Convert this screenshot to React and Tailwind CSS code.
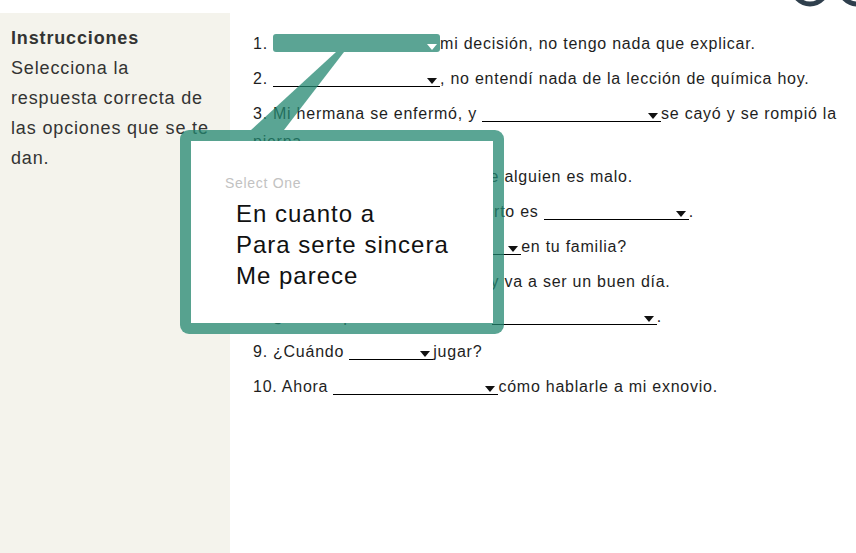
import React from 'react';

const TEAL_GLASS = 'rgba(35,135,112,0.75)';

/* ---------------- DROPDOWN BLANK ---------------- */
function Blank({ w, active }) {
    return (
        <span
            className={
                active
                    ? 'relative inline-block h-[18px] align-[-3px] rounded-[3px] bg-[#5ba494]'
                    : 'relative inline-block h-[18px] align-[-3px] border-b border-black'
            }
            style={{ width: w }}
        >
            <svg
                viewBox="0 0 10 6"
                className="absolute right-[3px] bottom-[2px] w-[10px] h-[6px]"
            >
                <polygon points="0,0 10,0 5,6" fill={active ? '#ffffff' : '#111111'} />
            </svg>
        </span>
    );
}

/* ---------------- QUESTIONS ---------------- */
const questions = [
    <>1. <Blank w={167} active />mi decisión, no tengo nada que explicar.</>,
    <>2. <Blank w={167} />, no entendí nada de la lección de química hoy.</>,
    <>3. Mi hermana se enfermó, y <Blank w={179} />se cayó y se rompió la pierna.</>,
    <>4. <Blank w={192} /> que alguien es malo.</>,
    <>5. <Blank w={174} /> lo cierto es <Blank w={145} />.</>,
    <>6. ¿Qué pasa <Blank w={157} />en tu familia?</>,
    <>7. <Blank w={193} /> hoy va a ser un buen día.</>,
    <>8. ¿Sabes qué? Lo malo sí es <Blank w={165} />.</>,
    <>9. ¿Cuándo <Blank w={84} />jugar?</>,
    <>10. Ahora <Blank w={165} />cómo hablarle a mi exnovio.</>,
];

export default function App() {
    return (
        <div
            className="relative w-full h-[553px] overflow-hidden bg-white flex flex-col"
            style={{ fontFamily: '"Liberation Sans", Arial, sans-serif' }}
        >
            {/* TOP STRIP */}
            <div className="h-[13px] shrink-0 bg-white" />

            <div className="flex flex-1 min-h-0">
                {/* SIDEBAR */}
                <aside className="w-[230px] shrink-0 bg-[#f4f3ec] pl-[11px] pr-[19px] pt-[10px] text-[18px] leading-[30px] tracking-[0.85px] text-[#333333]">
                    <h2 className="font-bold">Instrucciones</h2>
                    <p>Selecciona la respuesta correcta de las opciones que se te dan.</p>
                </aside>

                {/* QUESTIONS */}
                <main className="flex-1 bg-white pl-[23px] pr-[10px] pt-[17px]">
                    <ol className="flex flex-col gap-[7px] text-[16px] leading-[28px] tracking-[0.75px] text-[#1e1e1e]">
                        {questions.map((q, i) => (
                            <li key={i}>{q}</li>
                        ))}
                    </ol>
                </main>
            </div>

            {/* POPUP TAIL (translucent, over the text) */}
            <svg
                className="absolute left-0 top-0 z-20 pointer-events-none"
                width="856"
                height="140"
                viewBox="0 0 856 140"
            >
                <polygon points="336,52 344,52 284,130 251,130" fill={TEAL_GLASS} />
            </svg>

            {/* POPUP */}
            <div className="absolute z-20 left-[180px] top-[130px] w-[324px] h-[204px] rounded-[9px] border-[11px] border-[rgba(35,135,112,0.75)] bg-white bg-clip-padding">
                <div className="pl-[34px] pt-[32px]">
                    <div className="text-[14px] leading-[20px] tracking-[0.7px] text-[#c2c2c2]">Select One</div>
                    <ul className="mt-[5px] pl-[11px] text-[24px] leading-[31px] tracking-[1px] text-[#111111]">
                        <li>En cuanto a</li>
                        <li>Para serte sincera</li>
                        <li>Me parece</li>
                    </ul>
                </div>
            </div>

            {/* TOP RIGHT RINGS */}
            <svg
                className="absolute right-0 top-0 z-20"
                width="80"
                height="12"
                viewBox="0 0 80 12"
            >
                <circle cx="34" cy="-13" r="17" fill="none" stroke="#2f3f4d" strokeWidth="5" />
                <circle cx="81" cy="-13" r="17" fill="none" stroke="#2f3f4d" strokeWidth="5" />
            </svg>
        </div>
    );
}
